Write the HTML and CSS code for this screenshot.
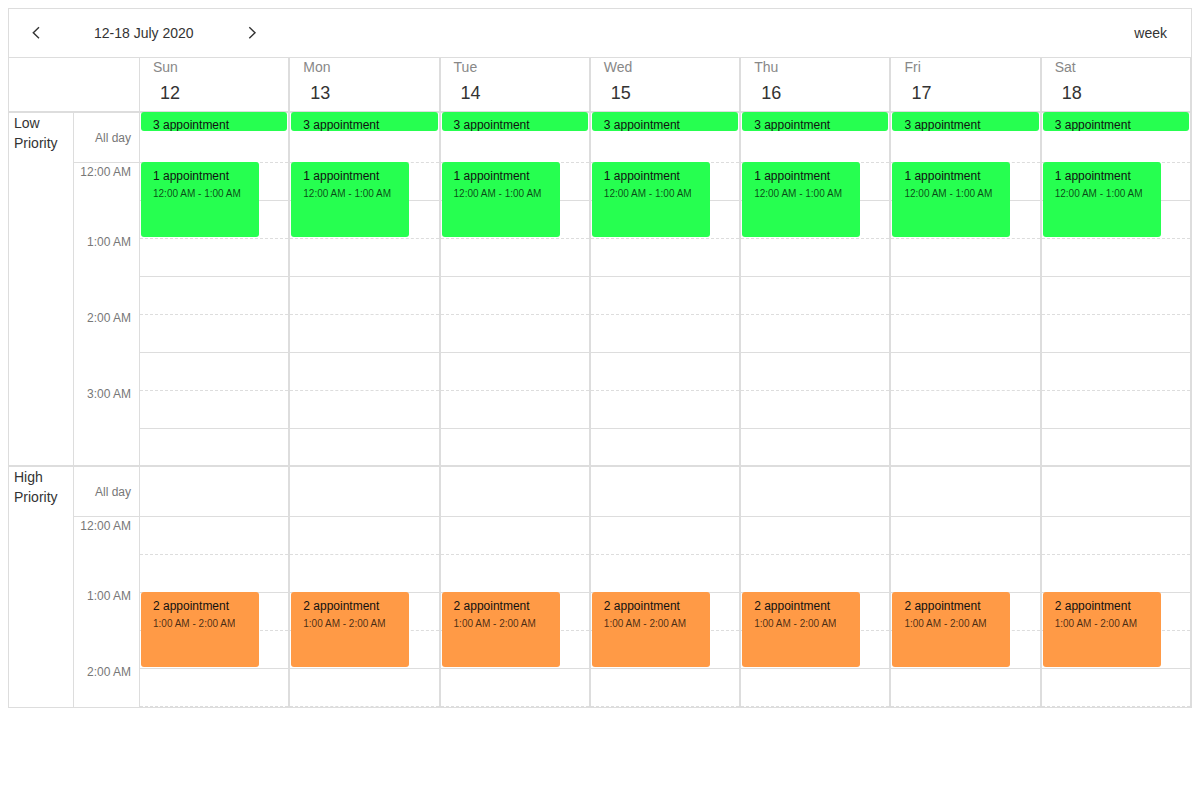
FILE: index.html
```html
<!DOCTYPE html>
<html>
<head>
<meta charset="utf-8">
<title>Scheduler</title>
<link rel="stylesheet" href="styles.css">
</head>
<body>
<div class="scheduler">
  <div class="toolbar">
    <div class="nav">
      <button class="nav-btn" aria-label="Previous"><svg width="36" height="36" viewBox="0 0 36 36"><polyline points="21,12.3 15.3,17.7 21,23.3"/></svg></button>
      <button class="caption">12-18 July 2020</button>
      <button class="nav-btn" aria-label="Next"><svg width="36" height="36" viewBox="0 0 36 36"><polyline points="15.3,12.3 21,17.7 15.3,23.3"/></svg></button>
    </div>
    <div class="view">week</div>
  </div>

  <div class="head-row">
    <div class="corner"></div>
    <div class="day-head"><div class="dname">Sun</div><div class="dnum">12</div></div>
    <div class="day-head"><div class="dname">Mon</div><div class="dnum">13</div></div>
    <div class="day-head"><div class="dname">Tue</div><div class="dnum">14</div></div>
    <div class="day-head"><div class="dname">Wed</div><div class="dnum">15</div></div>
    <div class="day-head"><div class="dname">Thu</div><div class="dnum">16</div></div>
    <div class="day-head"><div class="dname">Fri</div><div class="dnum">17</div></div>
    <div class="day-head"><div class="dname">Sat</div><div class="dnum">18</div></div>
  </div>

  <div class="group low">
    <div class="gname">Low<br>Priority</div>
    <div class="tcol">
      <div class="allday-label">All day</div>
      <div class="tlist">
        <div class="tl">12:00 AM</div>
        <div class="tl">1:00 AM</div>
        <div class="tl">2:00 AM</div>
        <div class="tl">3:00 AM</div>
      </div>
    </div>
    <div class="dcol">
      <div class="allday"></div>
      <div class="slots"><div class="slot"></div><div class="slot"></div><div class="slot"></div><div class="slot"></div><div class="slot"></div><div class="slot"></div><div class="slot"></div><div class="slot"></div></div>
      <div class="appt appt-allday green"><div class="atitle">3 appointment</div></div>
      <div class="appt appt-h0 green"><div class="atitle">1 appointment</div><div class="atime">12:00 AM - 1:00 AM</div></div>
    </div>
    <div class="dcol">
      <div class="allday"></div>
      <div class="slots"><div class="slot"></div><div class="slot"></div><div class="slot"></div><div class="slot"></div><div class="slot"></div><div class="slot"></div><div class="slot"></div><div class="slot"></div></div>
      <div class="appt appt-allday green"><div class="atitle">3 appointment</div></div>
      <div class="appt appt-h0 green"><div class="atitle">1 appointment</div><div class="atime">12:00 AM - 1:00 AM</div></div>
    </div>
    <div class="dcol">
      <div class="allday"></div>
      <div class="slots"><div class="slot"></div><div class="slot"></div><div class="slot"></div><div class="slot"></div><div class="slot"></div><div class="slot"></div><div class="slot"></div><div class="slot"></div></div>
      <div class="appt appt-allday green"><div class="atitle">3 appointment</div></div>
      <div class="appt appt-h0 green"><div class="atitle">1 appointment</div><div class="atime">12:00 AM - 1:00 AM</div></div>
    </div>
    <div class="dcol">
      <div class="allday"></div>
      <div class="slots"><div class="slot"></div><div class="slot"></div><div class="slot"></div><div class="slot"></div><div class="slot"></div><div class="slot"></div><div class="slot"></div><div class="slot"></div></div>
      <div class="appt appt-allday green"><div class="atitle">3 appointment</div></div>
      <div class="appt appt-h0 green"><div class="atitle">1 appointment</div><div class="atime">12:00 AM - 1:00 AM</div></div>
    </div>
    <div class="dcol">
      <div class="allday"></div>
      <div class="slots"><div class="slot"></div><div class="slot"></div><div class="slot"></div><div class="slot"></div><div class="slot"></div><div class="slot"></div><div class="slot"></div><div class="slot"></div></div>
      <div class="appt appt-allday green"><div class="atitle">3 appointment</div></div>
      <div class="appt appt-h0 green"><div class="atitle">1 appointment</div><div class="atime">12:00 AM - 1:00 AM</div></div>
    </div>
    <div class="dcol">
      <div class="allday"></div>
      <div class="slots"><div class="slot"></div><div class="slot"></div><div class="slot"></div><div class="slot"></div><div class="slot"></div><div class="slot"></div><div class="slot"></div><div class="slot"></div></div>
      <div class="appt appt-allday green"><div class="atitle">3 appointment</div></div>
      <div class="appt appt-h0 green"><div class="atitle">1 appointment</div><div class="atime">12:00 AM - 1:00 AM</div></div>
    </div>
    <div class="dcol">
      <div class="allday"></div>
      <div class="slots"><div class="slot"></div><div class="slot"></div><div class="slot"></div><div class="slot"></div><div class="slot"></div><div class="slot"></div><div class="slot"></div><div class="slot"></div></div>
      <div class="appt appt-allday green"><div class="atitle">3 appointment</div></div>
      <div class="appt appt-h0 green"><div class="atitle">1 appointment</div><div class="atime">12:00 AM - 1:00 AM</div></div>
    </div>
  </div>

  <div class="group high">
    <div class="gname">High<br>Priority</div>
    <div class="tcol">
      <div class="allday-label">All day</div>
      <div class="tlist">
        <div class="tl">12:00 AM</div>
        <div class="tl">1:00 AM</div>
        <div class="tl">2:00 AM</div>
      </div>
    </div>
    <div class="dcol">
      <div class="allday"></div>
      <div class="slots"><div class="slot"></div><div class="slot"></div><div class="slot"></div><div class="slot"></div><div class="slot"></div><div class="slot"></div></div>
      <div class="appt appt-h1 orange"><div class="atitle">2 appointment</div><div class="atime">1:00 AM - 2:00 AM</div></div>
    </div>
    <div class="dcol">
      <div class="allday"></div>
      <div class="slots"><div class="slot"></div><div class="slot"></div><div class="slot"></div><div class="slot"></div><div class="slot"></div><div class="slot"></div></div>
      <div class="appt appt-h1 orange"><div class="atitle">2 appointment</div><div class="atime">1:00 AM - 2:00 AM</div></div>
    </div>
    <div class="dcol">
      <div class="allday"></div>
      <div class="slots"><div class="slot"></div><div class="slot"></div><div class="slot"></div><div class="slot"></div><div class="slot"></div><div class="slot"></div></div>
      <div class="appt appt-h1 orange"><div class="atitle">2 appointment</div><div class="atime">1:00 AM - 2:00 AM</div></div>
    </div>
    <div class="dcol">
      <div class="allday"></div>
      <div class="slots"><div class="slot"></div><div class="slot"></div><div class="slot"></div><div class="slot"></div><div class="slot"></div><div class="slot"></div></div>
      <div class="appt appt-h1 orange"><div class="atitle">2 appointment</div><div class="atime">1:00 AM - 2:00 AM</div></div>
    </div>
    <div class="dcol">
      <div class="allday"></div>
      <div class="slots"><div class="slot"></div><div class="slot"></div><div class="slot"></div><div class="slot"></div><div class="slot"></div><div class="slot"></div></div>
      <div class="appt appt-h1 orange"><div class="atitle">2 appointment</div><div class="atime">1:00 AM - 2:00 AM</div></div>
    </div>
    <div class="dcol">
      <div class="allday"></div>
      <div class="slots"><div class="slot"></div><div class="slot"></div><div class="slot"></div><div class="slot"></div><div class="slot"></div><div class="slot"></div></div>
      <div class="appt appt-h1 orange"><div class="atitle">2 appointment</div><div class="atime">1:00 AM - 2:00 AM</div></div>
    </div>
    <div class="dcol">
      <div class="allday"></div>
      <div class="slots"><div class="slot"></div><div class="slot"></div><div class="slot"></div><div class="slot"></div><div class="slot"></div><div class="slot"></div></div>
      <div class="appt appt-h1 orange"><div class="atitle">2 appointment</div><div class="atime">1:00 AM - 2:00 AM</div></div>
    </div>
  </div>
</div>
</body>
</html>
```

FILE: styles.css
```css
body {
  margin: 8px;
  font-family: "Liberation Sans", Arial, sans-serif;
  color: #333;
  background: #fff;
}

.scheduler {
  height: 700px;
  box-sizing: border-box;
  border: 1px solid #ddd;
  overflow: hidden;
}

/* toolbar */
.toolbar {
  height: 48px;
  border-bottom: 1px solid #ddd;
  display: flex;
  align-items: center;
  justify-content: space-between;
  padding: 0 24px 0 9px;
}

.nav {
  display: flex;
  align-items: center;
}

.nav-btn,
.caption {
  background: none;
  border: 0;
  padding: 0;
  margin: 0;
  font: inherit;
  color: #333;
  cursor: pointer;
}

.nav-btn {
  width: 36px;
  height: 36px;
  display: block;
}

.nav-btn svg {
  display: block;
}

.nav-btn polyline {
  fill: none;
  stroke: #333;
  stroke-width: 1.4;
}

.caption {
  height: 36px;
  font-size: 14px;
  padding: 0 40px 0 40px;
}

.view {
  font-size: 14px;
  color: #333;
}

/* header */
.head-row,
.group {
  display: grid;
  grid-template-columns: 65px 65px repeat(7, minmax(0, 1fr));
}

.head-row {
  border-bottom: 2px solid #ddd;
}

.corner {
  grid-column: span 2;
}

.day-head {
  height: 53px;
  border-left: 1px solid #ddd;
  border-right: 1px solid #ddd;
  padding-left: 13px;
}

.dname {
  font-size: 14px;
  line-height: 18px;
  color: #888;
}

.dnum {
  font-size: 18px;
  line-height: 22px;
  margin-top: 6px;
  padding-left: 7px;
  color: #333;
}

/* groups */
.low {
  border-bottom: 2px solid #ddd;
}

.gname {
  border-right: 1px solid #ddd;
  font-size: 14px;
  line-height: 20px;
  padding-left: 5px;
  color: #333;
}

.allday-label {
  height: 49px;
  border-bottom: 1px solid #ddd;
  display: flex;
  align-items: center;
  justify-content: flex-end;
  padding-right: 8px;
  font-size: 12px;
  color: #777;
}

.tlist {
  padding-top: 2px;
}

.tl {
  height: 76px;
  line-height: 14px;
  font-size: 12px;
  text-align: right;
  padding-right: 8px;
  color: #777;
}

.tl:first-child {
  height: 70px;
}

.dcol {
  position: relative;
  border-left: 1px solid #ddd;
  border-right: 1px solid #ddd;
}

.allday {
  height: 49px;
}

.slot {
  height: 38px;
  box-sizing: border-box;
  border-top: 1px solid #ddd;
}

.low .slot:last-child {
  height: 37px;
}

.low .slot:nth-child(odd) {
  border-top-style: dashed;
}

.high .slot:nth-child(even) {
  border-top-style: dashed;
}

/* appointments */
.appt {
  position: absolute;
  left: 1px;
  box-sizing: border-box;
  border-radius: 3px;
  padding: 7px 0 0 12px;
  overflow: hidden;
  white-space: nowrap;
}

.green {
  background: #26ff50;
}

.orange {
  background: #ff9a46;
}

.appt-allday {
  top: -1px;
  right: 1px;
  height: 19px;
  padding-top: 6px;
}

.appt-h0 {
  top: 49px;
  width: 118px;
  height: 75px;
}

.appt-h1 {
  top: 125px;
  width: 118px;
  height: 75px;
}

.atitle {
  font-size: 12px;
  line-height: 15px;
  color: #111;
}

.atime {
  font-size: 10px;
  line-height: 13px;
  margin-top: 3px;
  color: rgba(0, 0, 0, 0.72);
}
```
